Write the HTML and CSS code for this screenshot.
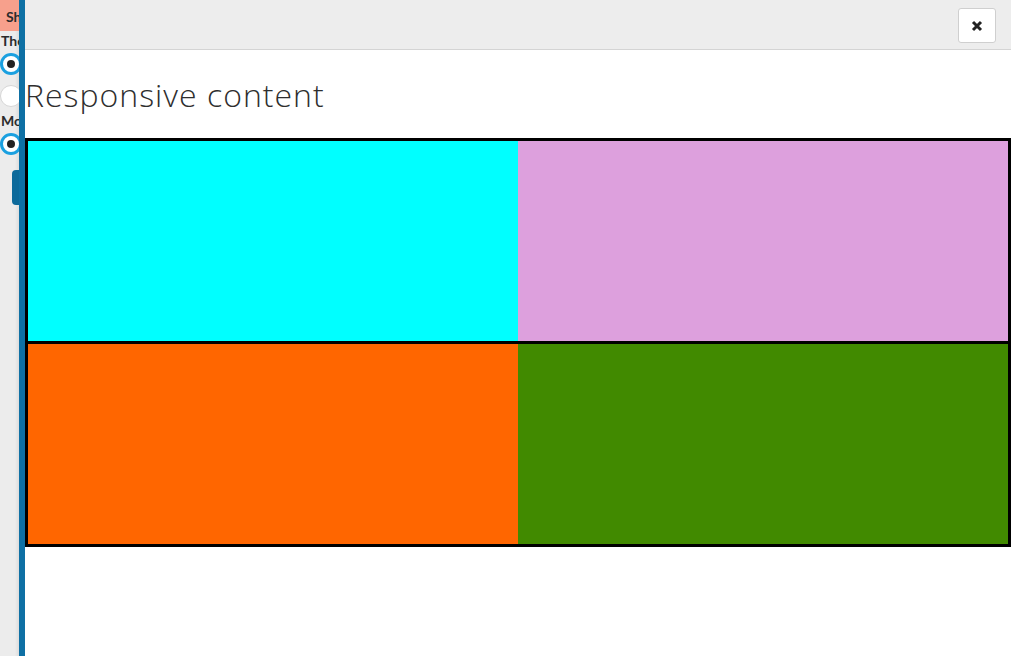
FILE: index.html
```html
<!DOCTYPE html>
<html lang="en">
<head>
<meta charset="utf-8">
<title>Responsive content</title>
<link rel="stylesheet" href="styles.css">
</head>
<body>
<div class="app">
  <aside class="sidebar">
    <div class="sb-head">Shapes</div>
    <div class="sb-body">
      <div class="sb-label">Theme</div>
      <label class="opt" aria-label="Light"><span class="radio checked"></span></label>
      <label class="opt" aria-label="Dark"><span class="radio"></span></label>
      <div class="sb-label sb-label-2">Mode</div>
      <label class="opt" aria-label="Grid"><span class="radio checked"></span></label>
      <button class="sb-btn" aria-label="Apply"></button>
    </div>
  </aside>
  <div class="divider"></div>
  <main class="main">
    <header class="topbar">
      <button class="close" aria-label="Close">
        <svg width="12" height="12" viewBox="0 0 12 12"><path d="M2 2 L10 10 M10 2 L2 10" stroke="#222" stroke-width="3" stroke-linecap="butt"/></svg>
      </button>
    </header>
    <section class="content">
      <h1 class="title">Responsive content</h1>
      <div class="grid">
        <div class="cell cyan"></div>
        <div class="cell plum"></div>
        <div class="cell orange"></div>
        <div class="cell green"></div>
      </div>
    </section>
  </main>
</div>
</body>
</html>
```

FILE: styles.css
```css
html, body {
  margin: 0;
  padding: 0;
  height: 100%;
  overflow: hidden;
  font-family: Lato, "Open Sans", sans-serif;
  color: #222;
  background: #fff;
}

.app {
  display: flex;
  height: 656px;
}

.sidebar {
  width: 19px;
  flex: none;
  overflow: hidden;
  background: linear-gradient(to right, #ececec 0, #ececec 15px, #dcdcdc 19px);
}

.sb-head {
  height: 31px;
  box-sizing: border-box;
  padding: 9px 0 0 6px;
  background: #f7a08c;
  font-weight: 700;
  font-size: 14px;
  line-height: 16px;
  color: #2b2b2b;
  white-space: nowrap;
  width: 200px;
}

.sb-body {
  width: 200px;
  padding: 2px 0 0 0;
  display: flex;
  flex-direction: column;
}

.sb-label {
  font-weight: 700;
  font-size: 14px;
  line-height: 16px;
  padding-left: 1px;
  color: #2b2b2b;
  white-space: nowrap;
}

.opt {
  display: flex;
  align-items: center;
  height: 22px;
  margin: 4px 0 6px;
}

.radio {
  width: 22px;
  height: 22px;
  box-sizing: border-box;
  border-radius: 50%;
  background: #fff;
  border: 1px solid #d6d6d6;
  flex: none;
  position: relative;
}

.radio.checked {
  border: 3px solid #1aa0e0;
  background: #fff;
}

.radio.checked::after {
  content: "";
  position: absolute;
  left: 4px;
  top: 4px;
  width: 8px;
  height: 8px;
  border-radius: 50%;
  background: #222;
}

.sb-btn {
  margin: 9px 0 0 12px;
  width: 90px;
  height: 35px;
  border: none;
  border-radius: 4px;
  background: #0d6a9b;
  padding: 0;
  align-self: flex-start;
}

.divider {
  width: 6px;
  flex: none;
  background: #0e70a4;
}

.main {
  flex: 1;
  min-width: 0;
  display: flex;
  flex-direction: column;
}

.topbar {
  flex: none;
  background: #ededed;
  border-bottom: 1px solid #d4d4d4;
  display: flex;
  justify-content: flex-end;
  align-items: flex-start;
  padding: 8px 15px 0 0;
  height: 41px;
}

.close {
  width: 38px;
  height: 35px;
  background: #fff;
  border: 1px solid #cfcfcf;
  border-radius: 3px;
  display: flex;
  align-items: center;
  justify-content: center;
  padding: 0;
}

.content {
  flex: 1;
}

.title {
  margin: 26px 0 24px;
  font-family: "Open Sans", Lato, sans-serif;
  font-weight: 300;
  font-size: 32px;
  line-height: 38px;
  letter-spacing: 1px;
  color: #2e2e2e;
}

.grid {
  display: grid;
  grid-template-columns: 1fr 1fr;
  grid-template-rows: 200px 200px;
  row-gap: 3px;
  background: #000;
  border: 3px solid #000;
}

.cyan { background: #00ffff; }
.plum { background: #dda0dd; }
.orange { background: #ff6600; }
.green { background: #418a00; }
```
